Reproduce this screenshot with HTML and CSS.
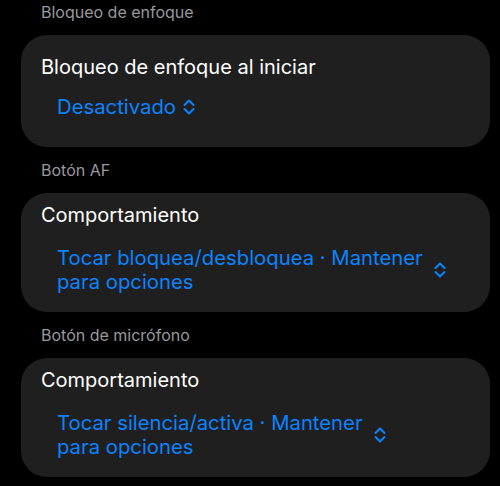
FILE: index.html
```html
<!DOCTYPE html>
<html lang="es">
  <head>
    <title>Ajustes de enfoque</title>
    <link rel="stylesheet" href="styles.css">
  </head>
  <body>
    <div class="settings">
      <p class="sectionHeader">Bloqueo de enfoque</p>
      <div class="card cardTall">
        <p class="rowTitle">Bloqueo de enfoque al iniciar</p>
        <div class="picker">
          <span class="pickerValue">Desactivado</span>
          <svg class="chevron" viewBox="0 0 12 16" width="12" height="16">
            <path d="M1.5 6 L6 1.5 L10.5 6 M1.5 10 L6 14.5 L10.5 10" />
          </svg>
        </div>
      </div>

      <p class="sectionHeader">Botón AF</p>
      <div class="card">
        <p class="rowTitle">Comportamiento</p>
        <div class="picker">
          <span class="pickerValue">Tocar bloquea/desbloquea · Mantener<br>para opciones</span>
          <svg class="chevron" viewBox="0 0 12 16" width="12" height="16">
            <path d="M1.5 6 L6 1.5 L10.5 6 M1.5 10 L6 14.5 L10.5 10" />
          </svg>
        </div>
      </div>

      <p class="sectionHeader">Botón de micrófono</p>
      <div class="card">
        <p class="rowTitle">Comportamiento</p>
        <div class="picker">
          <span class="pickerValue">Tocar silencia/activa · Mantener<br>para opciones</span>
          <svg class="chevron" viewBox="0 0 12 16" width="12" height="16">
            <path d="M1.5 6 L6 1.5 L10.5 6 M1.5 10 L6 14.5 L10.5 10" />
          </svg>
        </div>
      </div>
    </div>
  </body>
</html>
```

FILE: styles.css
```css
html {
  background-color: black;
}
body {
  margin: 0;
  font-family: Inter, 'Noto Sans', sans-serif;
}
p {
  margin: 0;
}
.settings {
  padding: 2px 10px 0 21px;
}
.sectionHeader {
  color: #98989e;
  font-size: 16px;
  line-height: 20px;
  padding-left: 20px;
  margin: 0 0 13px 0;
}
.card + .sectionHeader {
  margin-top: 13px;
}
.card {
  background-color: #1f1f1f;
  border-radius: 26px;
  padding: 10px 20px 18px 20px;
}
.cardTall {
  padding-top: 20px;
  padding-bottom: 28px;
}
.rowTitle {
  color: white;
  font-size: 20px;
  line-height: 25px;
}
.picker {
  display: inline-flex;
  align-items: center;
  gap: 11px;
  margin: 18px 0 0 16px;
  color: #0a84ff;
}
.cardTall .picker {
  margin-top: 15px;
  gap: 7px;
}
.pickerValue {
  font-size: 20.3px;
  line-height: 24px;
}
.chevron {
  fill: none;
  stroke: #0a84ff;
  stroke-width: 2;
  stroke-linecap: round;
  stroke-linejoin: round;
}
```
